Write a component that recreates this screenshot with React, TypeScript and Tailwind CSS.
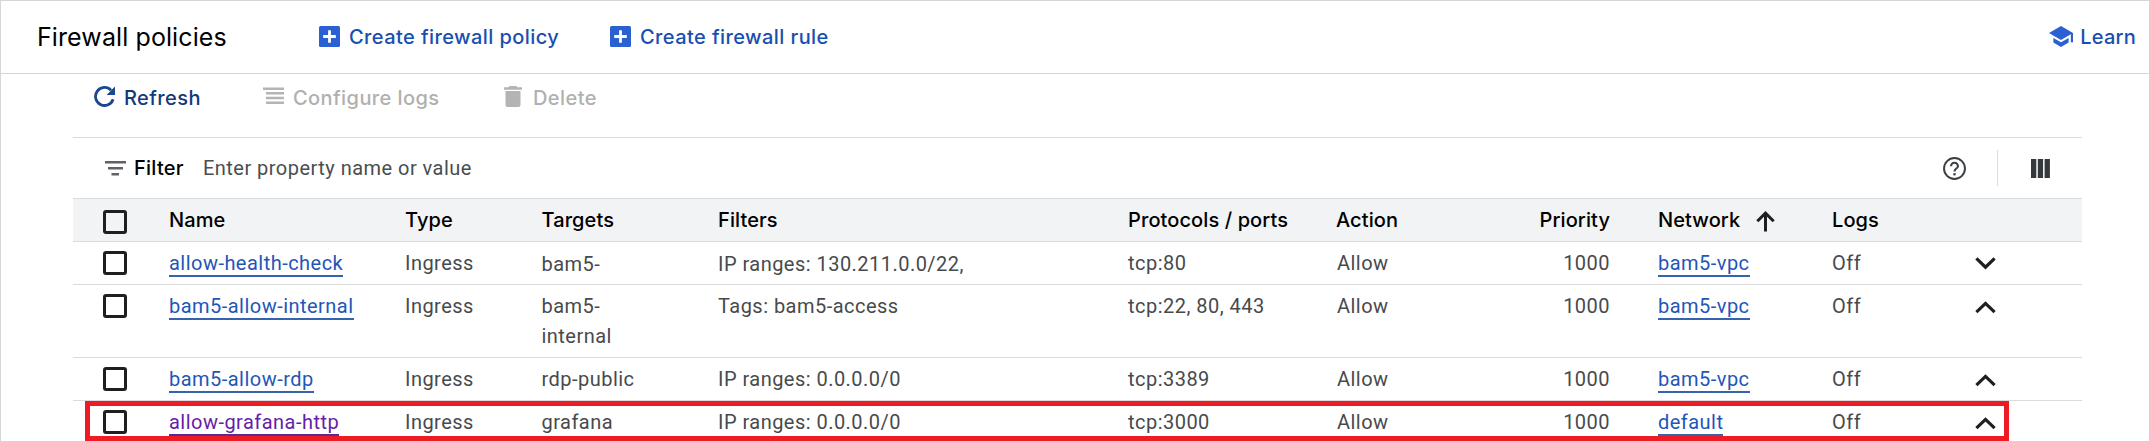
import type { ReactNode } from "react";

const GRID =
  "grid grid-cols-[96px_235px_137.5px_176.5px_410px_208px_148px_174px_174px_136px_114px] border-b border-[#d9dbde]";

type Rule = {
  name: string;
  visited?: boolean;
  targets: string[];
  filters: string;
  ports: string;
  network: string;
  open: boolean;
  marked?: boolean;
};

const rules: Rule[] = [
  { name: "allow-health-check", targets: ["bam5-"], filters: "IP ranges: 130.211.0.0/22,", ports: "tcp:80", network: "bam5-vpc", open: false },
  { name: "bam5-allow-internal", targets: ["bam5-", "internal"], filters: "Tags: bam5-access", ports: "tcp:22, 80, 443", network: "bam5-vpc", open: true },
  { name: "bam5-allow-rdp", targets: ["rdp-public"], filters: "IP ranges: 0.0.0.0/0", ports: "tcp:3389", network: "bam5-vpc", open: true },
  { name: "allow-grafana-http", visited: true, targets: ["grafana"], filters: "IP ranges: 0.0.0.0/0", ports: "tcp:3000", network: "default", open: true, marked: true },
];

function PlusBox() {
  return (
    <svg className="mt-1 shrink-0" width="21" height="21" viewBox="0 0 21 21">
      <rect width="21" height="21" rx="1.5" fill="#2b60d2" />
      <path d="M10.5 4.2v12.6M4.2 10.5h12.6" stroke="#fff" strokeWidth="2.8" />
    </svg>
  );
}

function SchoolIcon() {
  return (
    <svg className="mt-1 shrink-0" width="24" height="21" viewBox="1 3 22 18" preserveAspectRatio="none" fill="#2b60d2">
      <path d="M5 13.18v4L12 21l7-3.82v-4L12 17l-7-3.82zM12 3L1 9l11 6 9-4.91V17h2V9L12 3z" />
    </svg>
  );
}

function RefreshIcon() {
  return (
    <svg className="mt-[3px] shrink-0" width="21" height="21" viewBox="0 0 21 21">
      <path d="M17 4.2A9 9 0 1 0 19.1 13.2" fill="none" stroke="#1b4690" strokeWidth="2.8" />
      <path d="M21 0.5v8.4h-8.4z" fill="#1b4690" />
    </svg>
  );
}

function LogsIcon() {
  return (
    <svg className="mt-1 shrink-0" width="21" height="18" viewBox="0 0 21 18" fill="#b4b4b4">
      <path d="M0 .5h21v2.5H0zM3 5h18v2.6H3zM3 9.7h18v2.6H3zM3 14.4h18V17H3z" />
    </svg>
  );
}

function TrashIcon() {
  return (
    <svg className="mt-[3px] shrink-0" width="18" height="21" viewBox="0 0 18 21" fill="#b4b4b4">
      <path d="M5.5 0h7l1 1.3H18v2.5H0V1.3h4.5zM1.5 5h15v14a2 2 0 0 1-2 2h-11a2 2 0 0 1-2-2z" />
    </svg>
  );
}

function Checkbox({ className }: { className: string }) {
  return <span role="checkbox" aria-checked="false" className={`ml-[30px] block size-6 rounded-[3px] border-3 border-[#1f1f1f] ${className}`} />;
}

function Chevron({ open }: { open: boolean }) {
  return (
    <svg className={open ? "mt-4 ml-[7px]" : "mt-[15px] ml-[7px]"} width="21" height="13" viewBox="0 0 21 13" fill="none" stroke="#1f1f1f" strokeWidth="3.2">
      <path d={open ? "M1.4 11.2l9.1-8.8 9.1 8.8" : "M1.4 1.4l9.1 8.8 9.1-8.8"} />
    </svg>
  );
}

function Link({ visited, children }: { visited?: boolean; children: ReactNode }) {
  return (
    <a className={visited ? "border-b-2 border-[#5a2a9b] text-[#681da8]" : "border-b-2 border-[#3563ad] text-[#1f56b8]"}>{children}</a>
  );
}

function RuleRow({ rule }: { rule: Rule }) {
  const wrapPad = rule.open ? "py-1.5" : "pt-[7px] pb-[5px]";
  return (
    <div className={`relative ${GRID} text-[#474a4d]`}>
      <Checkbox className="mt-[9px]" />
      <div className="py-1.5"><Link visited={rule.visited}>{rule.name}</Link></div>
      <div className="py-1.5 pl-px">Ingress</div>
      <div className={wrapPad}>
        {rule.targets.map((t) => (
          <div key={t}>{t}</div>
        ))}
      </div>
      <div className={wrapPad}>{rule.filters}</div>
      <div className="py-1.5">{rule.ports}</div>
      <div className="py-1.5 pl-px">Allow</div>
      <div className="py-1.5 pr-12 text-right">1000</div>
      <div className="py-1.5"><Link>{rule.network}</Link></div>
      <div className="py-1.5">Off</div>
      <Chevron open={rule.open} />
      {rule.marked && <div className="absolute top-0 left-3 h-10 w-[1924px] border-5 border-[#ed1c24]" />}
    </div>
  );
}

export default function App() {
  return (
    <div className="h-[441px] w-[2149px] overflow-hidden border-t border-l border-[#d4d6d9] bg-white font-['Roboto',sans-serif] text-[20px] leading-[30px] tracking-[0.47px]">
      <header className="flex h-[73px] items-start border-b border-[#d4d6d9] pt-[21px] pl-[36px] font-['Inter',sans-serif] font-[450] tracking-[0.42px] text-[#174fb0]">
        <h1 className="w-[282px] text-[25px] font-[400] tracking-[0.1px] text-black">Firewall policies</h1>
        <div className="flex w-[291px] gap-[9px]"><PlusBox />Create firewall policy</div>
        <div className="flex gap-[9px]"><PlusBox />Create firewall rule</div>
        <div className="mr-[13px] ml-auto flex gap-[7px] tracking-[0.2px]"><SchoolIcon />Learn</div>
      </header>

      <main className="ml-[72px] w-[2009px]">
        <div className="flex h-16 items-start border-b border-[#d9dbde] pt-[9px] pl-[21px] font-['Inter',sans-serif] font-[450] tracking-[0.42px] text-[#b0b0b0]">
          <div className="flex w-[169px] gap-[9px] text-[#12397d]"><RefreshIcon />Refresh</div>
          <div className="flex w-[241px] gap-[9px]"><LogsIcon />Configure logs</div>
          <div className="flex gap-[11px]"><TrashIcon />Delete</div>
        </div>

        <div className="flex h-[61px] items-start border-b border-[#d9dbde] pt-[15px] pl-8">
          <svg className="mt-2 shrink-0" width="21" height="15" viewBox="0 0 21 15" fill="#5f6368">
            <path d="M0 0h21v2.6H0zM3 6h15v2.6H3zM6.5 12H14v2.6H6.5z" />
          </svg>
          <span className="ml-2 w-[69px] font-['Inter',sans-serif] font-[500] tracking-[0.25px] text-black">Filter</span>
          <span className="text-[#4a4d51]">Enter property name or value</span>
          <svg className="mt-1 ml-auto shrink-0" width="23" height="23" viewBox="2 2 20 20" fill="none" stroke="#3c4043">
            <circle cx="12" cy="12" r="9.1" strokeWidth="1.7" />
            <path d="M9 10a3 3 0 1 1 6 0c0 1.9-3 2.2-3 4.5" strokeWidth="1.8" />
            <path d="M12 16v2" strokeWidth="2" />
          </svg>
          <span className="-mt-[3px] ml-[31px] h-9 w-px bg-[#dadce0]" />
          <svg className="mt-1.5 mr-[32px] ml-[33px] shrink-0" width="19" height="19" viewBox="0 0 19 19" fill="#35393d">
            <path d="M0 0h5.3v19H0zM6.8 0h5.3v19H6.8zM13.6 0h5.3v19h-5.3z" />
          </svg>
        </div>

        <div className={`${GRID} h-[43px] bg-[#f1f3f4] pt-1.5 font-['Inter',sans-serif] font-[450] tracking-[0.1px] text-black`}>
          <Checkbox className="mt-[5px]" />
          <div>Name</div>
          <div className="pl-px">Type</div>
          <div>Targets</div>
          <div>Filters</div>
          <div>Protocols / ports</div>
          <div>Action</div>
          <div className="pr-12 text-right">Priority</div>
          <div className="flex gap-4">
            Network
            <svg className="mt-1.5 shrink-0" width="19" height="21" viewBox="0 0 19 21" fill="none" stroke="#1f1f1f" strokeWidth="3">
              <path d="M9.5 20.5V2.5M1.3 10.2l8.2-8.1 8.2 8.1" />
            </svg>
          </div>
          <div>Logs</div>
          <div />
        </div>

        {rules.map((rule) => (
          <RuleRow key={rule.name} rule={rule} />
        ))}
      </main>
    </div>
  );
}
